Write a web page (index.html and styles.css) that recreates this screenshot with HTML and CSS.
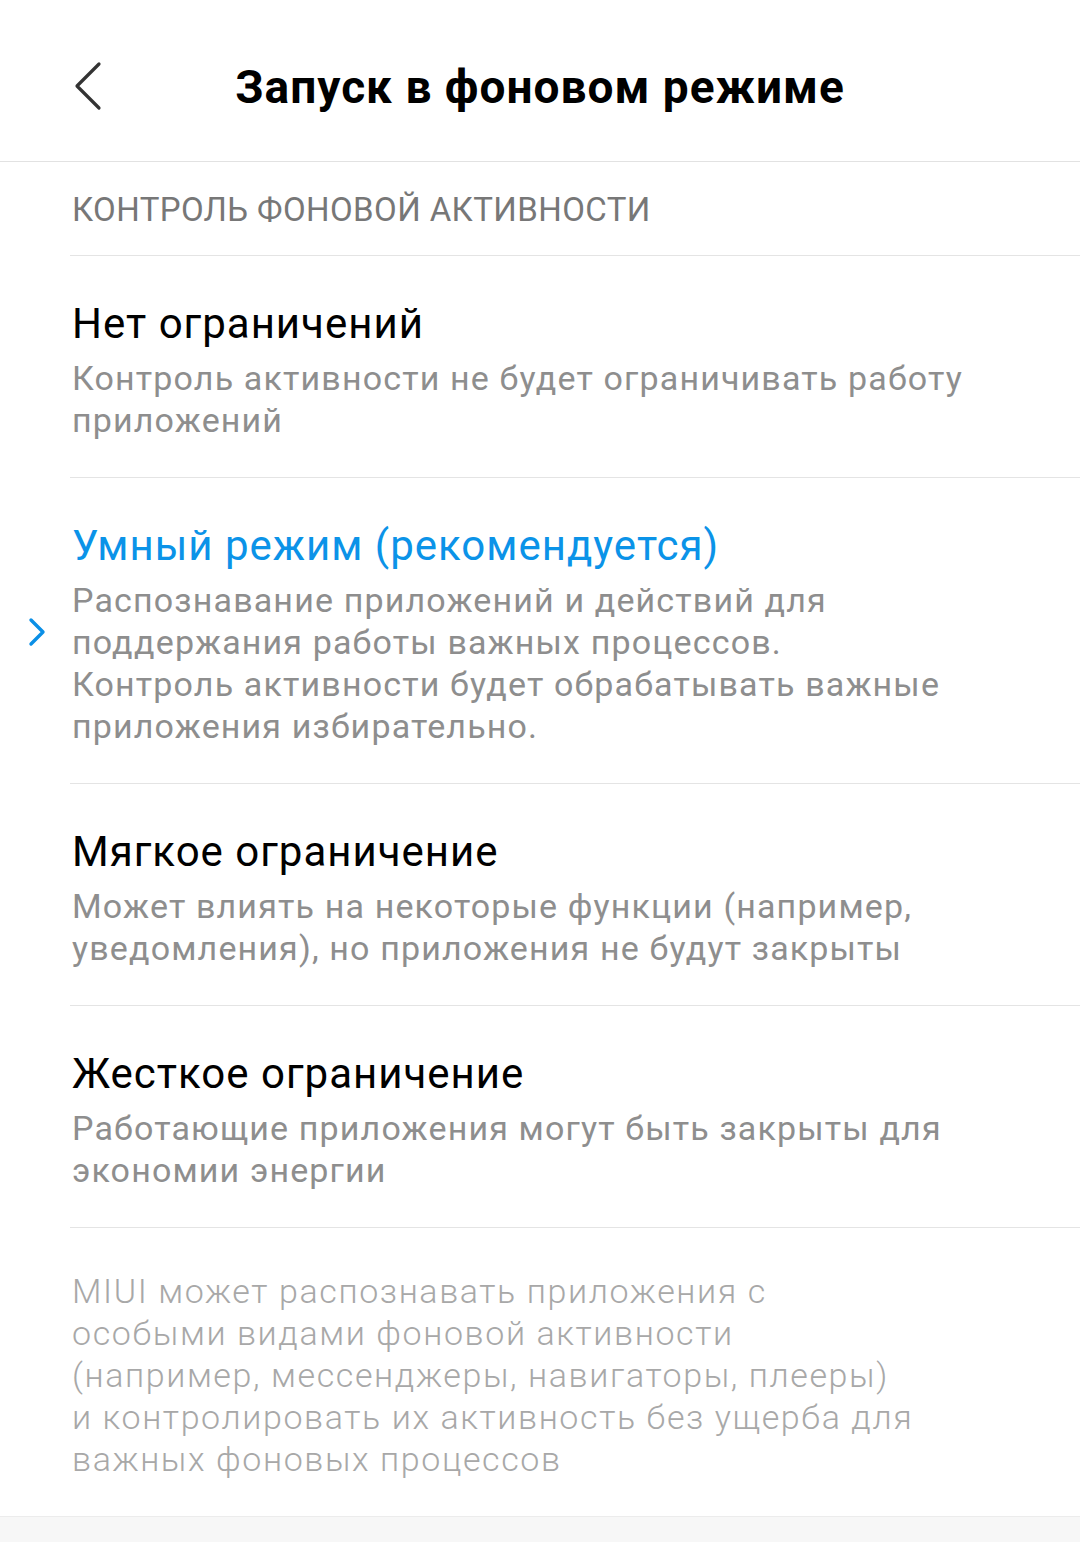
FILE: index.html
```html
<!DOCTYPE html>
<html lang="ru">
  <head>
    <meta charset="UTF-8" />
    <meta name="viewport" content="width=device-width, initial-scale=1.0" />
    <title>Запуск в фоновом режиме</title>
    <link rel="stylesheet" href="styles.css">
  </head>
  <body>
    <header class="topbar">
      <button class="back" aria-label="Назад">
        <svg width="30" height="50" viewBox="0 0 30 50">
          <path d="M26 3 L4 25 L26 47" fill="none" stroke="#333" stroke-width="3.2" stroke-linecap="round" stroke-linejoin="round" />
        </svg>
      </button>
      <h1>Запуск в фоновом режиме</h1>
    </header>

    <main class="page">
      <div class="section-label">КОНТРОЛЬ ФОНОВОЙ АКТИВНОСТИ</div>

      <ul class="options">
        <li class="option">
          <div class="option-title">Нет ограничений</div>
          <div class="option-desc">Контроль активности не будет ограничивать работу приложений</div>
        </li>
        <li class="option selected">
          <svg class="mark" width="18" height="30" viewBox="0 0 18 30">
            <path d="M3 3 L15 15 L3 27" fill="none" stroke="#0b8fe6" stroke-width="3.4" stroke-linecap="round" stroke-linejoin="round" />
          </svg>
          <div class="option-title">Умный режим (рекомендуется)</div>
          <div class="option-desc">Распознавание приложений и действий для поддержания работы важных процессов.<br>Контроль активности будет обрабатывать важные приложения избирательно.</div>
        </li>
        <li class="option">
          <div class="option-title">Мягкое ограничение</div>
          <div class="option-desc">Может влиять на некоторые функции (например, уведомления), но приложения не будут закрыты</div>
        </li>
        <li class="option">
          <div class="option-title">Жесткое ограничение</div>
          <div class="option-desc">Работающие приложения могут быть закрыты для экономии энергии</div>
        </li>
      </ul>

      <p class="note">MIUI может распознавать приложения с<br>особыми видами фоновой активности<br>(например, мессенджеры, навигаторы, плееры)<br>и контролировать их активность без ущерба для<br>важных фоновых процессов</p>
    </main>
  </body>
</html>
```

FILE: styles.css
```css
body {
  margin: 0;
  background-color: #f7f7f7;
  font-family: Roboto, "Noto Sans", sans-serif;
}

.topbar {
  position: relative;
  height: 161px;
  background: #ffffff;
  border-bottom: 1px solid #e2e2e2;
  display: flex;
  align-items: center;
  justify-content: center;
}

.back {
  position: absolute;
  left: 73px;
  top: 61px;
  padding: 0;
  border: none;
  background: none;
  line-height: 0;
}

.topbar h1 {
  margin: 0;
  margin-top: 12px;
  font-size: 46px;
  font-weight: 700;
  letter-spacing: 1px;
  color: #000000;
}

.page {
  background: #ffffff;
  border-bottom: 1px solid #ececec;
}

.section-label {
  margin-left: 70px;
  padding: 0 0 0 2px;
  height: 93px;
  line-height: 96px;
  font-size: 33px;
  letter-spacing: 0.4px;
  color: #777777;
  border-bottom: 1px solid #e4e4e4;
}

.options {
  list-style: none;
  margin: 0;
  padding: 0;
}

.option {
  position: relative;
  margin-left: 70px;
  padding: 41px 80px 36px 2px;
  border-bottom: 1px solid #e4e4e4;
}

.option-title {
  font-size: 42px;
  line-height: 54px;
  letter-spacing: 1px;
  color: #000000;
}

.option-desc {
  margin-top: 6px;
  font-size: 34px;
  line-height: 42px;
  letter-spacing: 1.15px;
  color: #8e8e8e;
}

.selected .option-title {
  color: #0b93e8;
}

.mark {
  position: absolute;
  left: -42px;
  top: 50%;
  margin-top: -14px;
}

.note {
  margin: 0;
  padding: 42px 40px 36px 72px;
  font-size: 34px;
  line-height: 42px;
  letter-spacing: 1.6px;
  font-weight: 300;
  color: #a8a8a8;
}
```
